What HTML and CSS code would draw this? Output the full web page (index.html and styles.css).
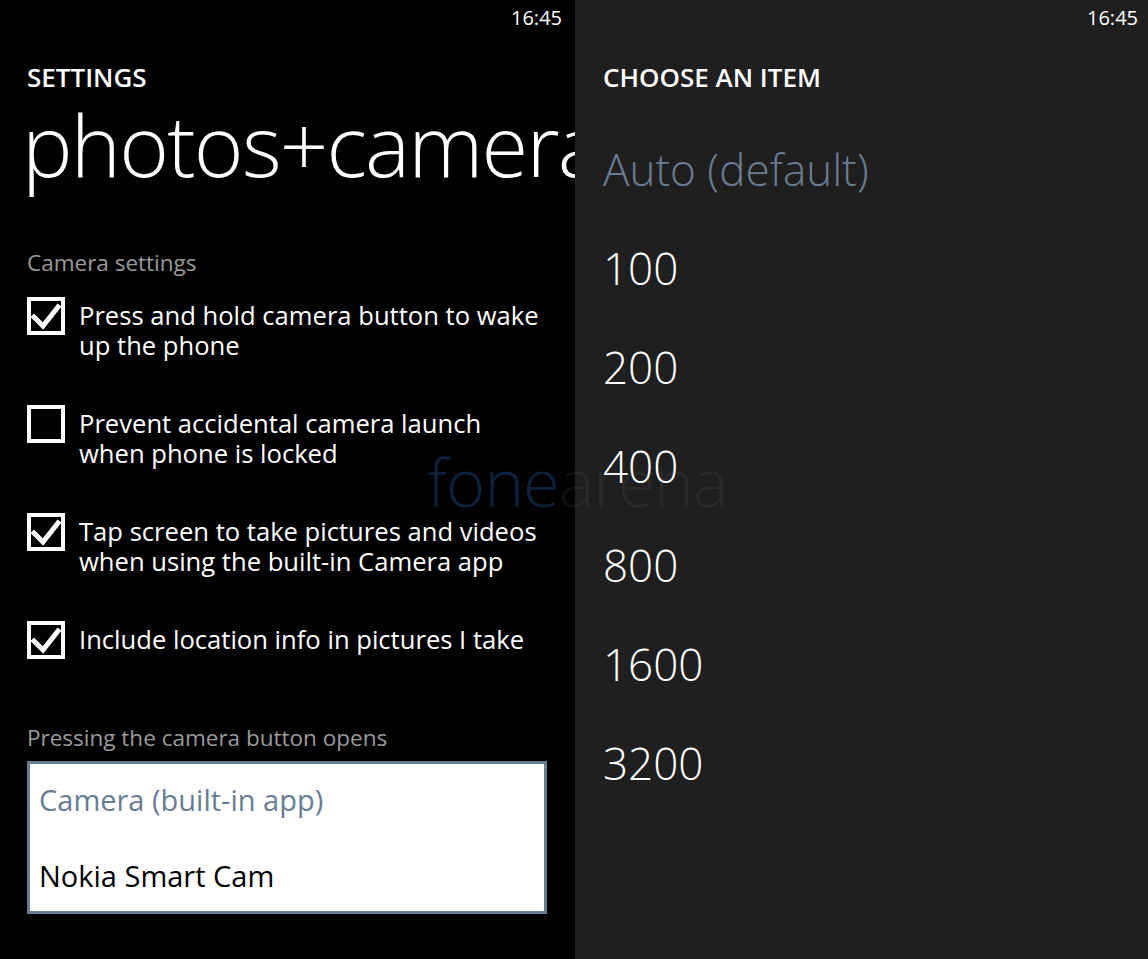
FILE: index.html
```html
<!DOCTYPE html>
<html lang="en">

<head>
    <meta charset="UTF-8">
    <title>photos+camera</title>
    <link rel="stylesheet" href="styles.css">
</head>

<body>
    <div class="screens">
        <!-- pantalla de ajustes -->
        <div class="screen screen-settings">
            <div class="status-bar">16:45</div>
            <div class="app-title">SETTINGS</div>
            <h1 class="page-title">photos+camera</h1>

            <div class="group-label label-camera">Camera settings</div>
            <div class="check-list">
                <div class="check-item">
                    <svg class="check-box" viewBox="0 0 38 38"><rect x="2" y="2" width="34" height="34"/><polyline points="7,20 16,29 31,10"/></svg>
                    <span class="check-text">Press and hold camera button to wake<br>up the phone</span>
                </div>
                <div class="check-item">
                    <svg class="check-box" viewBox="0 0 38 38"><rect x="2" y="2" width="34" height="34"/></svg>
                    <span class="check-text">Prevent accidental camera launch<br>when phone is locked</span>
                </div>
                <div class="check-item">
                    <svg class="check-box" viewBox="0 0 38 38"><rect x="2" y="2" width="34" height="34"/><polyline points="7,20 16,29 31,10"/></svg>
                    <span class="check-text">Tap screen to take pictures and videos<br>when using the built-in Camera app</span>
                </div>
                <div class="check-item">
                    <svg class="check-box" viewBox="0 0 38 38"><rect x="2" y="2" width="34" height="34"/><polyline points="7,20 16,29 31,10"/></svg>
                    <span class="check-text">Include location info in pictures I take</span>
                </div>
            </div>

            <div class="group-label label-opens">Pressing the camera button opens</div>
            <div class="list-picker">
                <div class="picker-option selected">Camera (built-in app)</div>
                <div class="picker-option">Nokia Smart Cam</div>
            </div>
        </div>

        <!-- selector de elementos -->
        <div class="screen screen-chooser">
            <div class="status-bar">16:45</div>
            <div class="app-title">CHOOSE AN ITEM</div>
            <ul class="item-list">
                <li class="selected">Auto (default)</li>
                <li>100</li>
                <li>200</li>
                <li>400</li>
                <li>800</li>
                <li>1600</li>
                <li>3200</li>
            </ul>
        </div>
    </div>

    <div class="watermark"><span class="wm-fone">fone</span><span class="wm-arena">arena</span></div>
</body>

</html>
```

FILE: styles.css
```css
:root {
    --accent-slate: #687d93;
    --label-gray: #9a9a9a;
    --chooser-bg: #1f1f1f;
}

* {
    margin: 0;
    padding: 0;
    box-sizing: border-box;
}

body {
    font-family: 'Open Sans', 'Noto Sans', sans-serif;
    background: #000;
    color: #fff;
    width: 1148px;
    height: 959px;
    overflow: hidden;
    position: relative;
}

.screens {
    display: flex;
    height: 959px;
}

.screen {
    height: 100%;
    overflow: hidden;
}

.screen-settings {
    width: 575px;
    background: #000;
    padding-left: 27px;
}

.screen-chooser {
    flex: 1;
    background: var(--chooser-bg);
    padding-left: 28px;
}

.status-bar {
    text-align: right;
    font-size: 20px;
    line-height: 20px;
    padding: 8px 10px 0 0;
    height: 36px;
}

.screen-settings .status-bar {
    padding-right: 13px;
}

.app-title {
    font-size: 26px;
    font-weight: 600;
    line-height: 30px;
    margin-top: 26px;
}

.page-title {
    font-size: 85px;
    font-weight: 300;
    line-height: 100px;
    white-space: nowrap;
    margin-left: -5px;
    margin-top: 2px;
    letter-spacing: -1.8px;
}

.group-label {
    color: var(--label-gray);
    font-size: 22.5px;
    line-height: 28px;
}

.label-camera {
    margin-top: 55px;
}

.check-list {
    display: flex;
    flex-direction: column;
    gap: 44px;
    margin-top: 20px;
}

.check-item {
    display: flex;
    align-items: flex-start;
    gap: 14px;
}

.check-box {
    flex: 0 0 38px;
    width: 38px;
    height: 38px;
    fill: none;
    stroke: #fff;
}

.check-box rect {
    stroke-width: 4;
}

.check-box polyline {
    stroke-width: 5;
    stroke-linecap: square;
}

.check-text {
    font-size: 25.6px;
    line-height: 30px;
    margin-top: 4px;
    white-space: nowrap;
}

.label-opens {
    margin-top: 65px;
}

.list-picker {
    width: 520px;
    margin-top: 9px;
    background: #fff;
    border: 3px solid var(--accent-slate);
    padding: 16px 0 15px 9px;
}

.picker-option {
    font-size: 29px;
    line-height: 40px;
    color: #000;
}

.picker-option + .picker-option {
    margin-top: 36px;
}

.picker-option.selected {
    color: var(--accent-slate);
}

.item-list {
    list-style: none;
    margin-top: 28px;
}

.item-list li {
    font-size: 44px;
    font-weight: 300;
    line-height: 99px;
    height: 99px;
}

.item-list li.selected {
    color: var(--accent-slate);
}

.watermark {
    position: absolute;
    left: 427px;
    top: 436px;
    font-size: 67px;
    font-weight: 300;
    line-height: 90px;
    pointer-events: none;
    letter-spacing: -1px;
}

.wm-fone {
    color: rgba(18, 55, 100, 0.6);
}

.wm-arena {
    color: rgba(120, 120, 120, 0.12);
}
```
